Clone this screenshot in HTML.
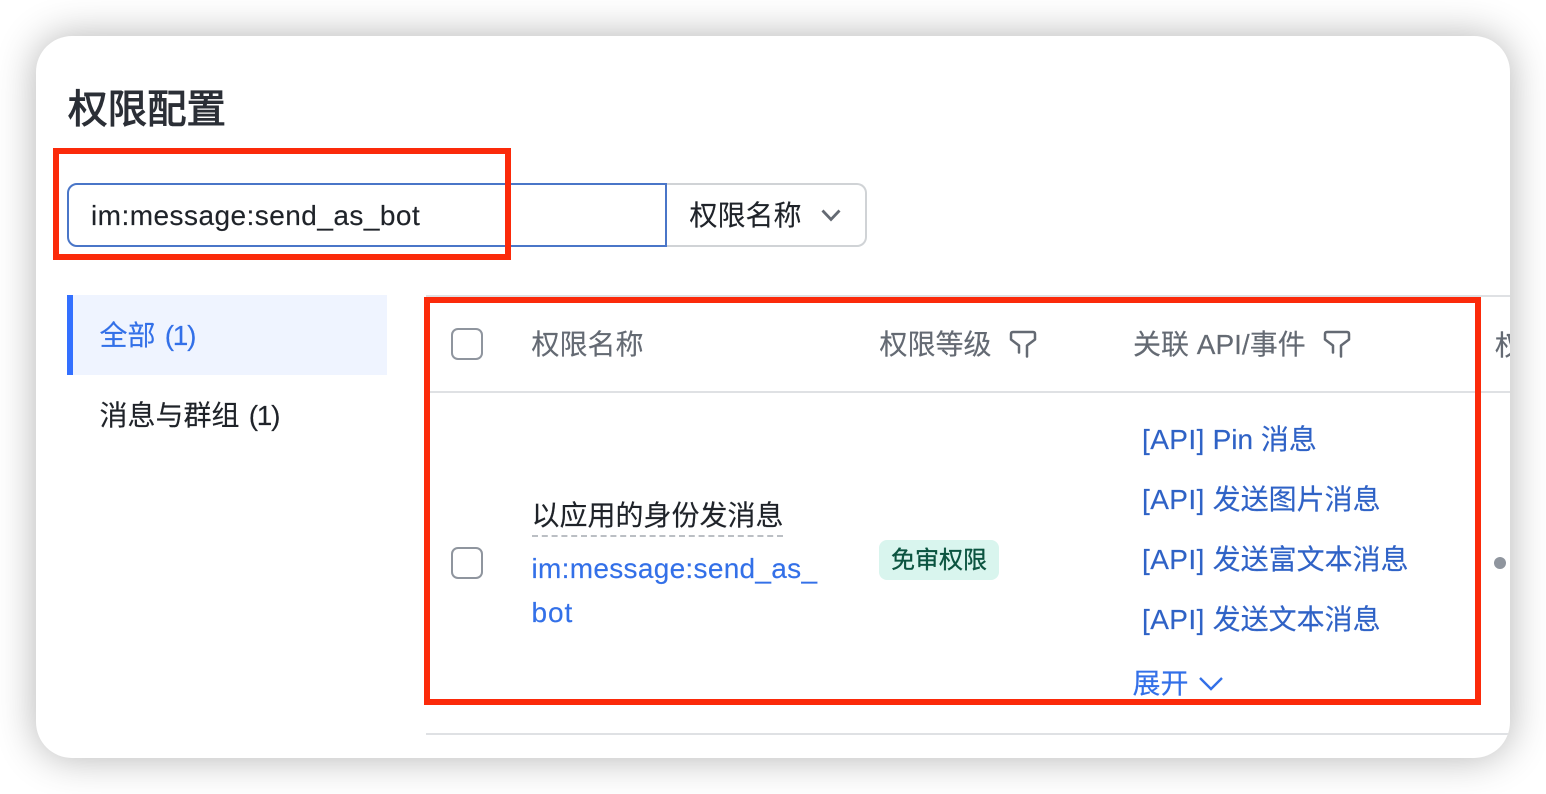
<!DOCTYPE html>
<html lang="zh">
<head>
<meta charset="utf-8">
<style>
html,body{margin:0;padding:0;width:1546px;height:794px;overflow:hidden;background:#fff;}
body{position:relative;font-family:"Liberation Sans","Noto Sans CJK SC",sans-serif;}
.card{position:absolute;left:36px;top:36px;width:1474px;height:722px;background:#fff;border-radius:36px;box-shadow:0 0 40px rgba(0,0,0,.3);}
.clip{position:absolute;left:36px;top:36px;width:1474px;height:722px;border-radius:36px;overflow:hidden;}
.t{position:absolute;white-space:nowrap;line-height:40px;height:40px;font-size:28px;color:#1f2329;-webkit-text-stroke:.15px currentColor;}
.g{color:#646a73}
.b{color:#3370e8}
.l{color:#2f62c6}
.a{letter-spacing:.42px}
.p{letter-spacing:-1.300px;margin-left:1.500px}
.line{position:absolute;height:2px;background:#dfe1e4}
.cb{position:absolute;left:451px;width:28px;height:28px;border:2px solid #8f959e;border-radius:7px;background:#fff}
.red{position:absolute;border:6px solid #fb2a0a;box-sizing:border-box;}
svg{position:absolute;overflow:visible}
</style>
</head>
<body>
<div class="card"></div>
<div class="clip">
  <div class="line" style="left:390px;top:259px;width:1084px"></div>
  <div class="line" style="left:390px;top:355px;width:1084px"></div>
  <div class="line" style="left:390px;top:697px;width:1084px"></div>
  <div class="t g" style="left:1459px;top:290px;">权限</div>
  <div style="position:absolute;left:1458px;top:521px;width:12px;height:12px;border-radius:50%;background:#8f959e"></div>
</div>

<div class="t" style="left:68px;top:85px;font-size:39.500px;line-height:50px;height:50px;font-weight:400;color:#2b2f36;-webkit-text-stroke:1px #2b2f36;">权限配置</div>

<div style="position:absolute;left:665px;top:183px;width:200px;height:60px;border:2px solid #d0d3d6;border-left:none;border-radius:0 10px 10px 0;background:#fff"></div>
<div style="position:absolute;left:67px;top:183px;width:596px;height:60px;border:2px solid #4a76c8;border-radius:10px 0 0 10px;background:#fff"></div>
<div class="t" style="left:91px;top:196px;letter-spacing:.46px;">im:message:send_as_bot</div>
<div class="t" style="left:689.500px;top:196px;">权限名称</div>
<svg style="left:820px;top:208px" width="22" height="14" viewBox="0 0 22 14"><path d="M2.500 2.500L11 11.500L19.500 2.500" fill="none" stroke="#646a73" stroke-width="2.800"/></svg>

<div style="position:absolute;left:67px;top:295px;width:320px;height:80px;background:#eff4ff"></div>
<div style="position:absolute;left:67px;top:295px;width:6px;height:80px;background:#3370ff"></div>
<div class="t b" style="left:99.500px;top:316px;">全部 <span class="p">(1)</span></div>
<div class="t" style="left:99.500px;top:396px;">消息与群组 <span class="p">(1)</span></div>

<div class="cb" style="top:328px"></div>
<div class="t g" style="left:531.500px;top:325px;">权限名称</div>
<div class="t g" style="left:879.500px;top:325px;">权限等级</div>
<svg style="left:1009px;top:330px" width="28" height="28" viewBox="0 0 28 28"><path d="M10 22.500V15.500L2 9.500V4Q2 2 4 2H24Q26 2 26 4V9.500L18 15.500V26.500" fill="none" stroke="#646a73" stroke-width="2.500" stroke-linecap="round" stroke-linejoin="round"/></svg>
<div class="t g" style="left:1133px;top:325px;">关联 API/事件</div>
<svg style="left:1323px;top:330px" width="28" height="28" viewBox="0 0 28 28"><path d="M10 22.500V15.500L2 9.500V4Q2 2 4 2H24Q26 2 26 4V9.500L18 15.500V26.500" fill="none" stroke="#646a73" stroke-width="2.500" stroke-linecap="round" stroke-linejoin="round"/></svg>

<div class="cb" style="top:547px"></div>
<div class="t" style="left:531.500px;top:496px;">以应用的身份发消息</div>
<div style="position:absolute;left:532px;top:535px;width:251px;border-top:2px dashed #bbbfc4"></div>
<div class="t b" style="left:531.500px;top:549px;letter-spacing:.3px;">im:message:send_as_</div>
<div class="t b" style="left:531.500px;top:593px;letter-spacing:.9px;">bot</div>

<div style="position:absolute;left:879px;top:540px;width:120px;height:40px;border-radius:8px;background:#d9f5ee"></div>
<div class="t" style="left:891px;top:541px;font-size:24px;color:#0b5440;-webkit-text-stroke:.35px #0b5440;">免审权限</div>

<div class="t l" style="left:1142px;top:420px;"><span class="a">[API]</span> Pin 消息</div>
<div class="t l" style="left:1142px;top:480px;"><span class="a">[API]</span> 发送图片消息</div>
<div class="t l" style="left:1142px;top:540px;"><span class="a">[API]</span> 发送富文本消息</div>
<div class="t l" style="left:1142px;top:600px;"><span class="a">[API]</span> 发送文本消息</div>
<div class="t b" style="left:1132.500px;top:664px;">展开</div>
<svg style="left:1198px;top:676px" width="26" height="16" viewBox="0 0 26 16"><path d="M2 2L13 13L24 2" fill="none" stroke="#3370e8" stroke-width="2.400"/></svg>

<div class="red" style="left:53px;top:148px;width:458px;height:112px"></div>
<div class="red" style="left:424px;top:297px;width:1057px;height:408px"></div>
</body>
</html>
